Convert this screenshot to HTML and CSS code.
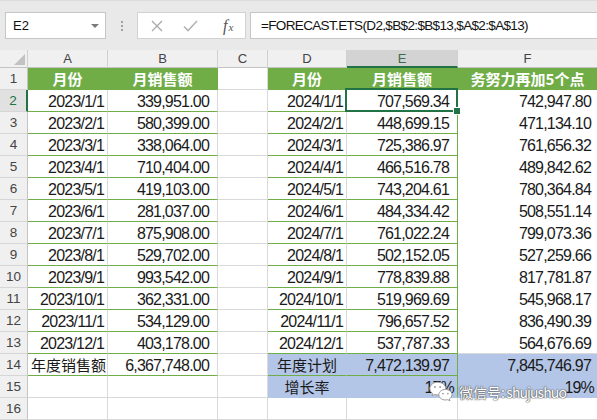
FILE: index.html
```html
<!DOCTYPE html>
<html lang="zh-CN">
<head>
<meta charset="utf-8">
<title>FORECAST.ETS</title>
<link rel="stylesheet" href="styles.css">
</head>
<body>
<div class="toolbar">
  <div class="namebox"><span>E2</span><span class="caret"></span></div>
  <div class="grip"><i></i><i></i><i></i></div>
  <div class="btns">
    <svg class="ic-x" width="12" height="12" viewBox="0 0 12 12"><path d="M1 1L11 11M11 1L1 11" stroke="#A8A8A8" stroke-width="1.3" fill="none"/></svg>
    <svg class="ic-ok" width="15" height="12" viewBox="0 0 15 12"><path d="M1 6.5L5 10.5L14 1" stroke="#B4B4B4" stroke-width="1.6" fill="none"/></svg>
    <span class="fx"><i>f</i><i class="sx">x</i></span>
  </div>
  <div class="formula">=FORECAST.ETS(D2,$B$2:$B$13,$A$2:$A$13)</div>
</div>

<div class="sheet">
  <div class="ch corner"><span class="tri"></span></div>
  <div class="ch">A</div><div class="ch">B</div><div class="ch">C</div><div class="ch">D</div><div class="ch s">E</div><div class="ch">F</div>

  <div class="rh">1</div>
  <div class="c z g">月份</div><div class="c z g">月销售额</div><div class="c"></div><div class="c z g">月份</div><div class="c z g">月销售额</div><div class="c z g">务努力再加5个点</div>

  <div class="rh s">2</div>
  <div class="c n tb">2023/1/1</div><div class="c n pr tb">339,951.00</div><div class="c"></div><div class="c n tb">2024/1/1</div><div class="c n pr tb er sel">707,569.34</div><div class="c n pf f">742,947.80</div>

  <div class="rh">3</div>
  <div class="c n tb">2023/2/1</div><div class="c n pr tb">580,399.00</div><div class="c"></div><div class="c n tb">2024/2/1</div><div class="c n pr tb er">448,699.15</div><div class="c n pf f">471,134.10</div>

  <div class="rh">4</div>
  <div class="c n tb">2023/3/1</div><div class="c n pr tb">338,064.00</div><div class="c"></div><div class="c n tb">2024/3/1</div><div class="c n pr tb er">725,386.97</div><div class="c n pf f">761,656.32</div>

  <div class="rh">5</div>
  <div class="c n tb">2023/4/1</div><div class="c n pr tb">710,404.00</div><div class="c"></div><div class="c n tb">2024/4/1</div><div class="c n pr tb er">466,516.78</div><div class="c n pf f">489,842.62</div>

  <div class="rh">6</div>
  <div class="c n tb">2023/5/1</div><div class="c n pr tb">419,103.00</div><div class="c"></div><div class="c n tb">2024/5/1</div><div class="c n pr tb er">743,204.61</div><div class="c n pf f">780,364.84</div>

  <div class="rh">7</div>
  <div class="c n tb">2023/6/1</div><div class="c n pr tb">281,037.00</div><div class="c"></div><div class="c n tb">2024/6/1</div><div class="c n pr tb er">484,334.42</div><div class="c n pf f">508,551.14</div>

  <div class="rh">8</div>
  <div class="c n tb">2023/7/1</div><div class="c n pr tb">875,908.00</div><div class="c"></div><div class="c n tb">2024/7/1</div><div class="c n pr tb er">761,022.24</div><div class="c n pf f">799,073.36</div>

  <div class="rh">9</div>
  <div class="c n tb">2023/8/1</div><div class="c n pr tb">529,702.00</div><div class="c"></div><div class="c n tb">2024/8/1</div><div class="c n pr tb er">502,152.05</div><div class="c n pf f">527,259.66</div>

  <div class="rh">10</div>
  <div class="c n tb">2023/9/1</div><div class="c n pr tb">993,542.00</div><div class="c"></div><div class="c n tb">2024/9/1</div><div class="c n pr tb er">778,839.88</div><div class="c n pf f">817,781.87</div>

  <div class="rh">11</div>
  <div class="c n tb">2023/10/1</div><div class="c n pr tb">362,331.00</div><div class="c"></div><div class="c n tb">2024/10/1</div><div class="c n pr tb er">519,969.69</div><div class="c n pf f">545,968.17</div>

  <div class="rh">12</div>
  <div class="c n tb">2023/11/1</div><div class="c n pr tb">534,129.00</div><div class="c"></div><div class="c n tb">2024/11/1</div><div class="c n pr tb er">796,657.52</div><div class="c n pf f">836,490.39</div>

  <div class="rh">13</div>
  <div class="c n tb">2023/12/1</div><div class="c n pr tb">403,178.00</div><div class="c"></div><div class="c n tb">2024/12/1</div><div class="c n pr tb er">537,787.33</div><div class="c n pf">564,676.69</div>

  <div class="rh">14</div>
  <div class="c z tb">年度销售额</div><div class="c n pr tb">6,367,748.00</div><div class="c"></div><div class="c z bl tb">年度计划</div><div class="c n pr bl tb er">7,472,139.97</div><div class="c n pf bl">7,845,746.97</div>

  <div class="rh">15</div>
  <div class="c"></div><div class="c"></div><div class="c"></div><div class="c z bl">增长率</div><div class="c n bl er">17%</div><div class="c n bl pp">19%</div>

  <div class="rh">16</div>
  <div class="c"></div><div class="c"></div><div class="c"></div><div class="c"></div><div class="c"></div><div class="c"></div>
</div>

<div class="wm">
  <svg width="26" height="21" viewBox="0 0 30 26">
    <path d="M11 1.5C5.5 1.5 1.2 5 1.2 9.4c0 2.5 1.4 4.7 3.6 6.2l-0.9 2.9 3.3-1.8c1.2 0.3 2.4 0.5 3.8 0.5 5.5 0 9.8-3.5 9.8-7.8S16.5 1.5 11 1.5z" fill="#fff" stroke="#999" stroke-width="1.2"/>
    <path d="M20.5 10.5c-4.6 0-8.2 2.9-8.2 6.5s3.6 6.5 8.2 6.5c1 0 2-0.1 2.9-0.4l2.7 1.5-0.7-2.4c1.9-1.2 3.2-3.1 3.2-5.2 0-3.6-3.6-6.5-8.1-6.5z" fill="#fff" stroke="#999" stroke-width="1.2"/>
    <circle cx="7.5" cy="7.5" r="1.3" fill="#A0A0A0"/><circle cx="14" cy="7.5" r="1.3" fill="#A0A0A0"/>
    <circle cx="17.5" cy="15.5" r="1.1" fill="#A0A0A0"/><circle cx="23.5" cy="15.5" r="1.1" fill="#A0A0A0"/>
  </svg>
  <span class="wmt">微信号<span class="wml">: shujushuo</span></span>
</div>
</body>
</html>
```
FILE: styles.css
```css
* { box-sizing: border-box; margin: 0; padding: 0; }
html, body { width: 597px; height: 420px; overflow: hidden; }
body {
  background: #fff;
  font-family: "Liberation Sans", Arial, sans-serif;
  color: #222;
  position: relative;
}

/* ---------- formula bar ---------- */
.toolbar {
  height: 50px;
  background: #E9E9E9;
  border-top: 1px solid #DCDCDC;
  padding-top: 11px;
  display: flex;
  align-items: flex-start;
}
.namebox {
  margin-left: 5px;
  width: 101px;
  height: 27px;
  background: #fff;
  border: 1px solid #C6C6C6;
  display: flex;
  align-items: center;
  justify-content: space-between;
  padding: 0 6px 0 7px;
  font-size: 13px;
  color: #111;
}
.caret {
  width: 0; height: 0;
  border-left: 4px solid transparent;
  border-right: 4px solid transparent;
  border-top: 4px solid #7A7A7A;
}
.grip {
  width: 31px;
  height: 27px;
  display: flex;
  flex-direction: column;
  align-items: center;
  justify-content: center;
  gap: 2px;
}
.grip i { width: 2px; height: 2px; background: #A2A2A2; }
.btns {
  width: 109px;
  height: 27px;
  background: #fff;
  border: 1px solid #D2D2D2;
  display: flex;
  align-items: center;
}
.ic-x { margin-left: 13px; flex: none; }
.ic-ok { margin-left: 20px; flex: none; }
.fx {
  margin-left: 25px;
  font-family: "Liberation Serif", serif;
  font-size: 16px;
  color: #555;
}
.fx .sx { font-size: 11px; margin-left: 1px; }
.formula {
  margin-left: 4px;
  flex: 1;
  height: 27px;
  background: #fff;
  border: 1px solid #C6C6C6;
  border-right: none;
  padding-left: 10px;
  display: flex;
  align-items: center;
  font-size: 13.5px;
  letter-spacing: -0.65px;
  color: #111;
  white-space: nowrap;
}

/* ---------- grid ---------- */
.sheet {
  display: grid;
  grid-template-columns: 28px 80px 110px 50px 79px 111px 140px;
  grid-template-rows: 18px repeat(16, 22px);
}
.ch {
  background: #F0F0F0;
  border-right: 1px solid #D0D0D0;
  border-bottom: 1px solid #C4C4C4;
  display: flex;
  align-items: center;
  justify-content: center;
  font-size: 13px;
  color: #444;
}
.ch.s {
  background: #D3D3D3;
  border-bottom: 2px solid #217346;
  color: #3A6B4E;
}
.corner {
  justify-content: flex-end;
  align-items: flex-end;
  padding: 0 2px 2px 0;
}
.tri {
  width: 0; height: 0;
  border-left: 11px solid transparent;
  border-bottom: 11px solid #C2C2C2;
}
.rh {
  background: #F0F0F0;
  border-right: 1px solid #C4C4C4;
  border-bottom: 1px solid #D6D6D6;
  display: flex;
  align-items: center;
  justify-content: center;
  font-size: 13.5px;
  color: #444;
}
.rh.s {
  background: #E1E1E1;
  color: #217346;
  border-right: 2px solid #217346;
}

.c {
  border-right: 1px solid #D9D9D9;
  border-bottom: 1px solid #D9D9D9;
  padding: 0 3px;
  line-height: 21px;
  white-space: nowrap;
  overflow: hidden;
  color: #1A1A1A;
}
.n {
  font-size: 16px;
  letter-spacing: -0.8px;
  text-align: right;
  padding-top: 1px;
}
.pr { padding-right: 8px; }
.pf { padding-right: 6px; }
.pp { padding-right: 3px; }
.z {
  font-family: "Noto Sans CJK SC", sans-serif;
  font-size: 15px;
  text-align: center;
}
.g {
  background: #70AD47;
  border-color: #70AD47;
  color: #fff;
  font-weight: bold;
}
.f { border-bottom-color: #fff; }
.bl {
  background: #B4C6E7;
  border-right-color: #B4C6E7;
  border-bottom-color: #B4C6E7;
}
.tb { border-bottom-color: #70AD47; }
.er { border-right-color: #70AD47; }

.sel { position: relative; overflow: visible; }
.sel::after {
  content: "";
  position: absolute;
  left: -2px; top: -2px; right: -1px; bottom: -1px;
  border: 2px solid #217346;
}
.sel::before {
  content: "";
  position: absolute;
  right: -4px; bottom: -4px;
  width: 6px; height: 6px;
  background: #217346;
  border: 1px solid #fff;
  z-index: 2;
}

/* ---------- watermark ---------- */
.wm {
  position: absolute;
  left: 428px;
  top: 381px;
  display: flex;
  align-items: center;
  gap: 5px;
}
.wmt {
  font-family: "Noto Sans CJK SC", sans-serif;
  font-size: 14px;
  line-height: 20px;
  color: #fff;
  text-shadow: 0 0 1px #555, 0 0 2px #666, 0 0 1px #555;
}
.wml { letter-spacing: -0.9px; }
```
